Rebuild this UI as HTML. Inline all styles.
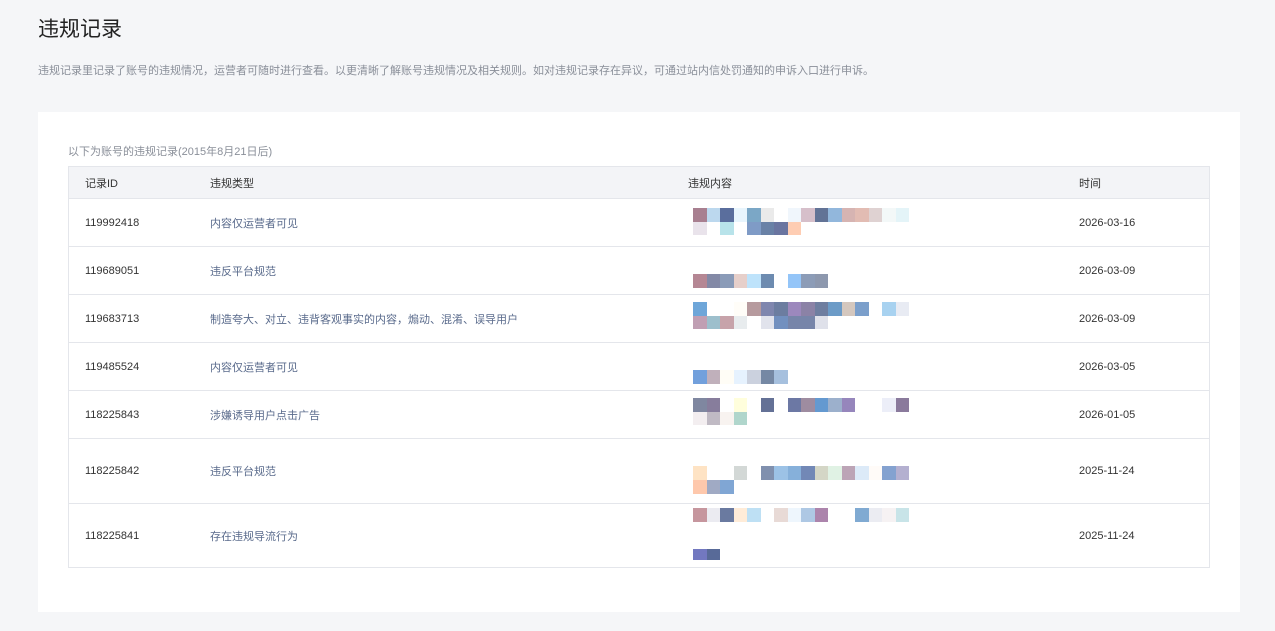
<!DOCTYPE html>
<html><head><meta charset="utf-8"><style>
*{margin:0;padding:0;box-sizing:border-box}
body{width:1275px;height:631px;background:#f5f6f8;font-family:"Liberation Sans","Noto Sans CJK SC",sans-serif;position:relative;overflow:hidden}
h1{position:absolute;left:38px;top:13px;font-size:21px;font-weight:normal;color:#222}
.desc{position:absolute;left:38px;top:62px;font-size:11px;color:#8a8f99}
.card{position:absolute;left:38px;top:112px;width:1202px;height:500px;background:#fff}
.sub{position:absolute;left:68px;top:143px;font-size:11px;color:#8a8f99}
.tbl{position:absolute;left:68px;top:166px;width:1142px;height:402px;border:1px solid #e4e6eb}
.r{position:absolute;left:0;width:1140px;border-top:1px solid #e4e6eb;font-size:11px;color:#333}
.r span{position:absolute;top:50%;transform:translateY(-50%)}
.c1{left:16px}.c2{left:141px;color:#5a6b8c}.c3{left:619px}.c4{left:1010px}
.hd{background:#f3f4f7;border-top:none;color:#333}
.hd .c2{color:#333}
.m{position:absolute;display:flex;height:13.5px}
.m i{display:block;width:13.5px;height:100%}
</style></head><body>
<h1>违规记录</h1>
<div class="desc">违规记录里记录了账号的违规情况，运营者可随时进行查看。以更清晰了解账号违规情况及相关规则。如对违规记录存在异议，可通过站内信处罚通知的申诉入口进行申诉。</div>
<div class="card"></div>
<div class="sub">以下为账号的违规记录(2015年8月21日后)</div>
<div class="tbl">
<div class="r hd" style="top:0;height:31px"><span class="c1">记录ID</span><span class="c2">违规类型</span><span class="c3">违规内容</span><span class="c4">时间</span></div>
<div class="r" style="top:31px;height:48px"><span class="c1">119992418</span><span class="c2">内容仅运营者可见</span><span class="c4">2026-03-16</span></div>
<div class="r" style="top:79px;height:48px"><span class="c1">119689051</span><span class="c2">违反平台规范</span><span class="c4">2026-03-09</span></div>
<div class="r" style="top:127px;height:48px"><span class="c1">119683713</span><span class="c2">制造夸大、对立、违背客观事实的内容，煽动、混淆、误导用户</span><span class="c4">2026-03-09</span></div>
<div class="r" style="top:175px;height:48px"><span class="c1">119485524</span><span class="c2">内容仅运营者可见</span><span class="c4">2026-03-05</span></div>
<div class="r" style="top:223px;height:48px"><span class="c1">118225843</span><span class="c2">涉嫌诱导用户点击广告</span><span class="c4">2026-01-05</span></div>
<div class="r" style="top:271px;height:65px"><span class="c1">118225842</span><span class="c2">违反平台规范</span><span class="c4">2025-11-24</span></div>
<div class="r" style="top:336px;height:65px"><span class="c1">118225841</span><span class="c2">存在违规导流行为</span><span class="c4">2025-11-24</span></div>
</div>

<div class="m" style="left:693px;top:208px"><i style="background:#a87f90"></i><i style="background:#bcd8ee"></i><i style="background:#5a6e9d"></i><i style="background:#e8f5fd"></i><i style="background:#7ba7c6"></i><i style="background:#eaeaea"></i><i></i><i style="background:#f0f6fc"></i><i style="background:#d6bfca"></i><i style="background:#627396"></i><i style="background:#92b7dc"></i><i style="background:#d6b4b2"></i><i style="background:#e2bcb3"></i><i style="background:#dfd2d2"></i><i style="background:#f3f8f8"></i><i style="background:#e4f4f8"></i></div>
<div class="m" style="left:693px;top:221.5px"><i style="background:#e9e3eb"></i><i></i><i style="background:#b8e3ea"></i><i></i><i style="background:#7f9bc6"></i><i style="background:#6981a6"></i><i style="background:#6a75a0"></i><i style="background:#fecdb3"></i></div>

<div class="m" style="left:693px;top:274px"><i style="background:#b58794"></i><i style="background:#8389a6"></i><i style="background:#8a9bb8"></i><i style="background:#e6cfca"></i><i style="background:#bee3fb"></i><i style="background:#6d8bb0"></i><i></i><i style="background:#94c5f8"></i><i style="background:#8c9cb7"></i><i style="background:#8d98ae"></i></div>

<div class="m" style="left:693px;top:302px"><i style="background:#6ea6d9"></i><i></i><i></i><i style="background:#fffdf8"></i><i style="background:#b69a9e"></i><i style="background:#7f86ae"></i><i style="background:#6c7da0"></i><i style="background:#9c88bd"></i><i style="background:#8b82a6"></i><i style="background:#6e7ea0"></i><i style="background:#6c9bc7"></i><i style="background:#d4c7be"></i><i style="background:#7b9fcb"></i><i></i><i style="background:#a8d2f0"></i><i style="background:#e8ebf3"></i></div>
<div class="m" style="left:693px;top:315.5px"><i style="background:#c09fb3"></i><i style="background:#9dbfcc"></i><i style="background:#c7a3aa"></i><i style="background:#e8ecee"></i><i></i><i style="background:#e1e3ec"></i><i style="background:#7290bf"></i><i style="background:#7785a9"></i><i style="background:#7785a9"></i><i style="background:#dfe1ea"></i></div>

<div class="m" style="left:693px;top:370px"><i style="background:#72a0dc"></i><i style="background:#c0b0bb"></i><i style="background:#fffdf6"></i><i style="background:#e6f2fe"></i><i style="background:#cbd1de"></i><i style="background:#7588a4"></i><i style="background:#a6c0de"></i></div>

<div class="m" style="left:693px;top:398px"><i style="background:#7f87a0"></i><i style="background:#877d9c"></i><i></i><i style="background:#fffedc"></i><i></i><i style="background:#647196"></i><i></i><i style="background:#6c78a4"></i><i style="background:#9e8ca0"></i><i style="background:#6499d0"></i><i style="background:#9cb0cc"></i><i style="background:#9686bc"></i><i></i><i></i><i style="background:#eceef8"></i><i style="background:#8a7a9c"></i></div>
<div class="m" style="left:693px;top:411.5px"><i style="background:#f3eef0"></i><i style="background:#c0bac4"></i><i style="background:#f8f3f0"></i><i style="background:#b0d6cc"></i></div>

<div class="m" style="left:693px;top:466px"><i style="background:#fee3c4"></i><i></i><i></i><i style="background:#d3d8d6"></i><i></i><i style="background:#8090ae"></i><i style="background:#9cc2e6"></i><i style="background:#86b0da"></i><i style="background:#7288b6"></i><i style="background:#d4d6c6"></i><i style="background:#e0f2e4"></i><i style="background:#bca4b6"></i><i style="background:#dceaf8"></i><i style="background:#fffbf8"></i><i style="background:#84a2d0"></i><i style="background:#b4b0d0"></i></div>
<div class="m" style="left:693px;top:480px"><i style="background:#fec8ac"></i><i style="background:#a0aac4"></i><i style="background:#80a6d4"></i></div>

<div class="m" style="left:693px;top:508px"><i style="background:#c6969e"></i><i style="background:#ebebf1"></i><i style="background:#6a7aa0"></i><i style="background:#ffecd8"></i><i style="background:#bee0f4"></i><i></i><i style="background:#e8dad6"></i><i style="background:#eef6fd"></i><i style="background:#aec8e4"></i><i style="background:#ac84ac"></i><i></i><i></i><i style="background:#80aad2"></i><i style="background:#ebecf2"></i><i style="background:#f6f2f3"></i><i style="background:#c8e4e8"></i></div>
<div class="m" style="left:693px;top:549px;height:11px"><i style="background:#7278c0"></i><i style="background:#586a98"></i></div>
</body></html>
